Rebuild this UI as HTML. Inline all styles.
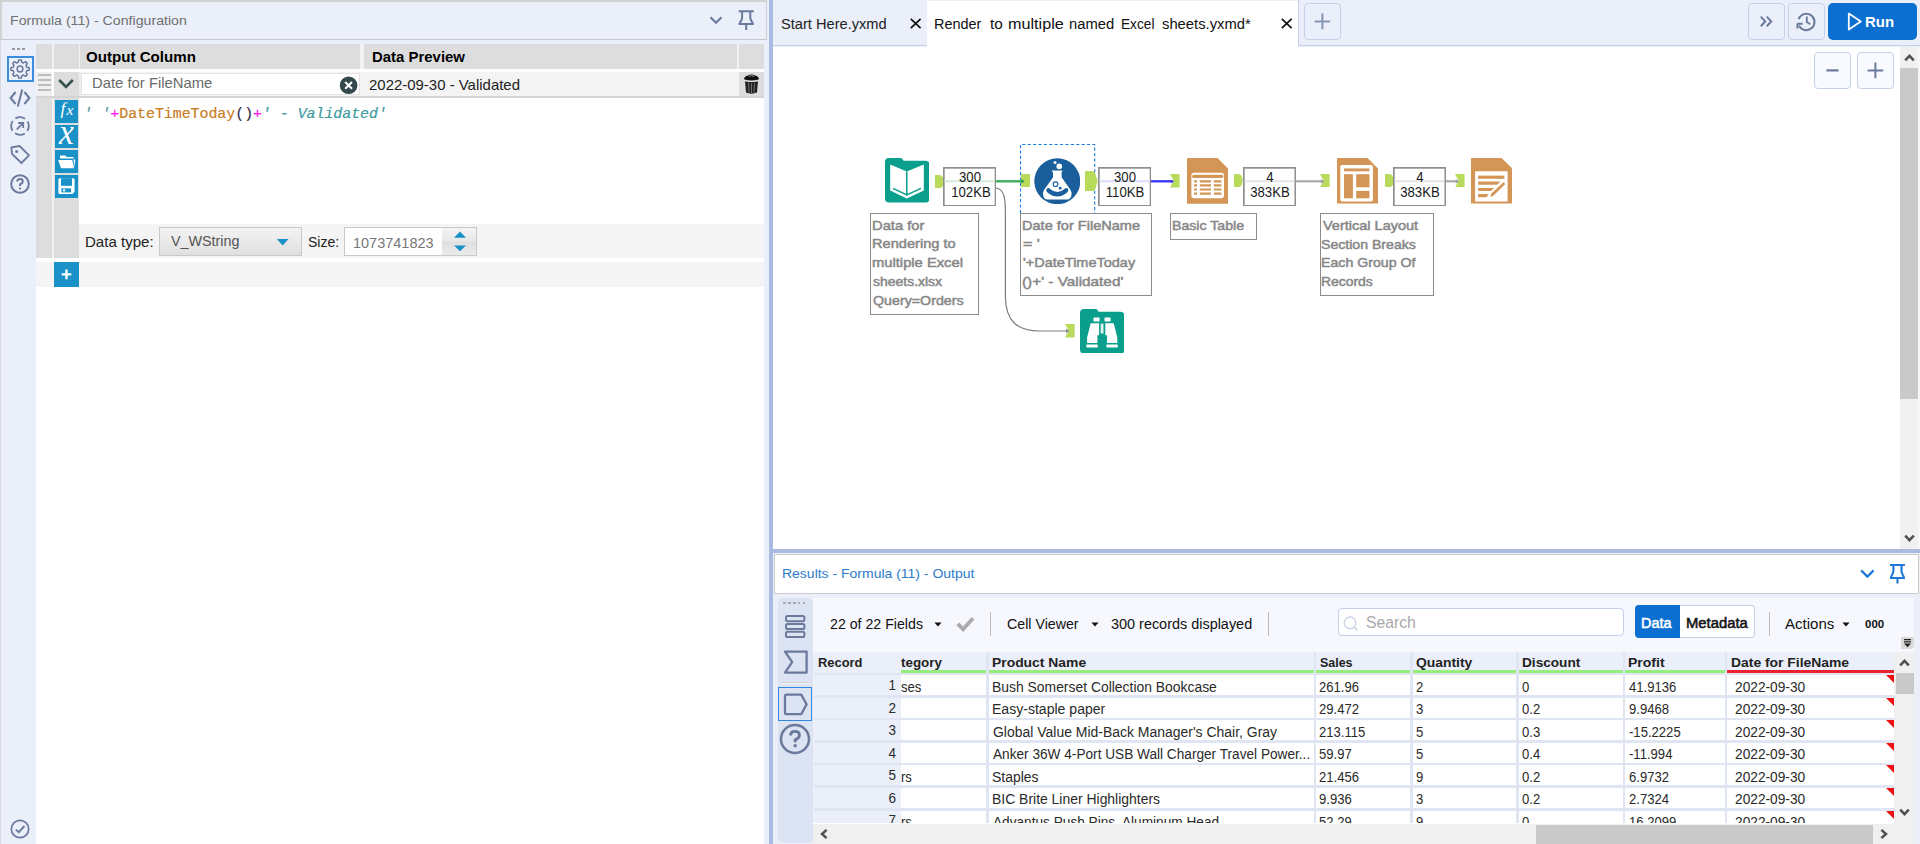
<!DOCTYPE html>
<html><head><meta charset="utf-8"><title>Alteryx Designer</title>
<style>
html,body{margin:0;padding:0;}
body{width:1920px;height:844px;overflow:hidden;background:#eaeff9;font-family:"Liberation Sans", sans-serif;}
#root{position:relative;width:1920px;height:844px;overflow:hidden;background:#eaeff9;}
.b{position:absolute;box-sizing:border-box;}
.t{position:absolute;white-space:pre;}
</style></head><body><div id="root">
<div class="b" style="left:0px;top:0px;width:767px;height:40px;background:#eaeff9;border:2px solid #d2d2d2;border-bottom:1px solid #c8c8c8;border-right:1px solid #cfcfcf;"></div>
<div class="b" style="left:0px;top:40px;width:1px;height:804px;background:#d8d8d8;"></div>
<svg class="b" style="left:706px;top:10px;" width="20" height="20" viewBox="0 0 20 20"><path d="M4.5 7.2 L10 12.8 L15.5 7.2" fill="none" stroke="#6b7a9c" stroke-width="2.1"/></svg>
<svg class="b" style="left:736px;top:8px;" width="20" height="24" viewBox="0 0 20 24"><path d="M2.7 3.2 H17.8 M6.1 3.2 V10.2 Q5.6 12.4 3.5 15.4 M14.3 3.2 V10.2 Q14.8 12.4 16.9 15.4 M2.6 16 H17.8 M10.2 16 V22" fill="none" stroke="#6b7a9c" stroke-width="2"/></svg>
<div class="b" style="left:36px;top:44px;width:728px;height:800px;background:#ffffff;"></div>
<div class="b" style="left:36px;top:44px;width:728px;height:25px;background:#f2f2f2;"></div>
<div class="b" style="left:52px;top:98px;width:2px;height:160px;background:#f2f2f2;"></div>
<div class="b" style="left:36px;top:44px;width:16px;height:25px;background:#dddddd;"></div>
<div class="b" style="left:54px;top:44px;width:25px;height:25px;background:#dddddd;"></div>
<div class="b" style="left:80px;top:44px;width:280px;height:25px;background:#dddddd;"></div>
<div class="b" style="left:364px;top:44px;width:373px;height:25px;background:#dddddd;"></div>
<div class="b" style="left:739px;top:44px;width:25px;height:25px;background:#dddddd;"></div>
<div class="b" style="left:36px;top:72px;width:728px;height:26px;background:#d4d4d4;"></div>
<div class="b" style="left:36px;top:72px;width:728px;height:24px;background:#f4f4f4;"></div>
<div class="b" style="left:36px;top:72px;width:16px;height:24px;background:#f0f0f0;"></div>
<div class="b" style="left:38px;top:74.2px;width:13px;height:2px;background:#bcbcbc;"></div>
<div class="b" style="left:38px;top:79.2px;width:13px;height:2px;background:#bcbcbc;"></div>
<div class="b" style="left:38px;top:84.1px;width:13px;height:2px;background:#bcbcbc;"></div>
<div class="b" style="left:38px;top:89.1px;width:13px;height:2px;background:#bcbcbc;"></div>
<div class="b" style="left:52px;top:72px;width:2px;height:24px;background:#ffffff;"></div>
<div class="b" style="left:54px;top:72px;width:25px;height:24px;background:#dddddd;"></div>
<svg class="b" style="left:56px;top:76px;" width="20" height="16" viewBox="0 0 20 16"><path d="M3.2 4 L10 11 L16.8 4" fill="none" stroke="#35504e" stroke-width="2.6"/></svg>
<div class="b" style="left:79px;top:72px;width:2px;height:24px;background:#eeeeee;"></div>
<div class="b" style="left:81px;top:73px;width:279px;height:22px;background:#ffffff;border:1px solid #e2e2e2;"></div>
<svg class="b" style="left:339px;top:76px;" width="19" height="19" viewBox="0 0 19 19"><circle cx="9.6" cy="9.3" r="8.8" fill="#33494b"/><path d="M6.2 5.9 L13 12.7 M13 5.9 L6.2 12.7" stroke="#fff" stroke-width="2.1"/></svg>
<div class="b" style="left:739px;top:72px;width:25px;height:24px;background:#dddddd;"></div>
<svg class="b" style="left:743px;top:73px;" width="17" height="22" viewBox="0 0 17 22"><path d="M1 6.2 Q1 3.6 5 2.6 Q8.5 0.2 12 2.6 Q16 3.6 16 6.2 Q8.5 8.6 1 6.2 Z" fill="#111"/><path d="M6 3.8 L8.5 2.2 L11 3.8" fill="none" stroke="#999" stroke-width="1"/><path d="M2 8.2 Q8.5 10 15 8.2 L14 19.5 Q8.5 21.8 3 19.5 Z" fill="#222"/><path d="M5.6 10 L6 19.6 M8.5 10.2 V20 M11.4 10 L11 19.6" stroke="#777" stroke-width="0.9"/></svg>
<div class="b" style="left:36px;top:98px;width:16px;height:160px;background:#dddddd;"></div>
<div class="b" style="left:54px;top:98px;width:25px;height:160px;background:#dddddd;"></div>
<div class="b" style="left:55px;top:100px;width:22.6px;height:22.6px;background:#1a91c7;"></div>
<div class="b" style="left:55px;top:125px;width:22.6px;height:22.6px;background:#1a91c7;"></div>
<div class="b" style="left:55px;top:150px;width:22.6px;height:22.6px;background:#1a91c7;"></div>
<div class="b" style="left:55px;top:175px;width:22.6px;height:22.6px;background:#1a91c7;"></div>
<svg class="b" style="left:55px;top:150px;" width="23" height="22" viewBox="0 0 23 22"><path d="M5 8.4 V5.6 H10.4 L11.6 7 H18.6 V8.6 H7.4 Z" fill="#fff"/><path d="M3.2 10 H17.2 L19.4 18.2 H6 Z" fill="#fff"/><path d="M18.3 9.6 H20.2 L19.9 16.5 Z" fill="#fff"/></svg>
<svg class="b" style="left:55px;top:175px;" width="23" height="22" viewBox="0 0 23 22"><path d="M3.4 4.8 Q3.4 3.2 5 3.2 H18 Q19.6 3.2 19.6 4.8 V16.8 L17.4 19 H5 Q3.4 19 3.4 17.4 Z" fill="#fff"/><rect x="6" y="3.2" width="11" height="7.6" fill="#1a91c7"/><rect x="6.4" y="13.4" width="9.6" height="4" fill="#1a91c7"/><rect x="8" y="14.4" width="2.2" height="2" fill="#fff"/></svg>
<div class="b" style="left:79px;top:224px;width:685px;height:34px;background:#f4f4f4;"></div>
<div class="b" style="left:159px;top:227px;width:143px;height:29px;border:1px solid #c9c9c9;background:linear-gradient(#f3f3f3,#e0e0e0);"></div>
<svg class="b" style="left:276px;top:238px;" width="14" height="9" viewBox="0 0 14 9"><path d="M0.8 1 H12.6 L6.7 7.6 Z" fill="#1a91c7"/></svg>
<div class="b" style="left:344px;top:227px;width:133px;height:29px;background:#ffffff;border:1px solid #c9c9c9;"></div>
<div class="b" style="left:442px;top:228px;width:34px;height:27px;background:linear-gradient(#f4f4f4 0%,#e8e8e8 48%,#dedede 52%,#ebebeb 100%);"></div>
<svg class="b" style="left:452px;top:230px;" width="16" height="24" viewBox="0 0 16 24"><path d="M2 7.7 L8 1.4 L14 7.7 Z M2 15.4 L8 21.3 L14 15.4 Z" fill="#1a91c7"/></svg>
<div class="b" style="left:36px;top:262px;width:728px;height:25px;background:#f4f4f4;"></div>
<div class="b" style="left:54px;top:262px;width:25px;height:25px;background:#1a91c7;"></div>
<svg class="b" style="left:54px;top:262px;" width="25" height="25" viewBox="0 0 25 25"><path d="M12.5 7.6 V17.2 M7.7 12.4 H17.3" stroke="#fff" stroke-width="2.4"/></svg>
<div class="b" style="left:12px;top:48px;width:3px;height:2px;background:#9a9a9a;"></div>
<div class="b" style="left:17px;top:48px;width:3px;height:2px;background:#9a9a9a;"></div>
<div class="b" style="left:22px;top:48px;width:3px;height:2px;background:#9a9a9a;"></div>
<div class="b" style="left:7px;top:56px;width:27px;height:26px;border:2px solid #3b8ede;"></div>
<svg class="b" style="left:0px;top:0px;" width="40" height="200" viewBox="0 0 40 200"><path d="M18.72 59.89 L21.28 59.89 L21.80 62.24 L23.51 62.94 L25.53 61.65 L27.35 63.47 L26.06 65.49 L26.76 67.20 L29.11 67.72 L29.11 70.28 L26.76 70.80 L26.06 72.51 L27.35 74.53 L25.53 76.35 L23.51 75.06 L21.80 75.76 L21.28 78.11 L18.72 78.11 L18.20 75.76 L16.49 75.06 L14.47 76.35 L12.65 74.53 L13.94 72.51 L13.24 70.80 L10.89 70.28 L10.89 67.72 L13.24 67.20 L13.94 65.49 L12.65 63.47 L14.47 61.65 L16.49 62.94 L18.20 62.24 Z" fill="none" stroke="#6b7a9c" stroke-width="1.5" stroke-linejoin="round"/><circle cx="20" cy="69" r="2.9" fill="none" stroke="#6b7a9c" stroke-width="1.5"/><path d="M15.6 92 L10.6 98 L15.6 104 M24.4 92 L29.4 98 L24.4 104 M22.2 89.4 L17.8 106.4" fill="none" stroke="#6b7a9c" stroke-width="2"/><circle cx="20" cy="126" r="8.8" fill="none" stroke="#6b7a9c" stroke-width="1.8" stroke-dasharray="10.2 3.62" stroke-dashoffset="5.1"/><path d="M16.8 129.4 L22.8 123.4 M18.2 123 H23.2 V128" fill="none" stroke="#6b7a9c" stroke-width="1.8"/><path d="M11.4 147.4 L19.6 146 L29 155.4 L21.4 163 L12 153.8 Z" fill="none" stroke="#6b7a9c" stroke-width="1.8" stroke-linejoin="round"/><circle cx="16.6" cy="151.4" r="1.5" fill="#6b7a9c"/><circle cx="20" cy="184" r="8.8" fill="none" stroke="#6b7a9c" stroke-width="2"/><path d="M17.2 181.6 Q17.2 179 20 179 Q22.8 179 22.8 181.4 Q22.8 183 20 184.4 V186" fill="none" stroke="#6b7a9c" stroke-width="2"/><circle cx="20" cy="188.6" r="1.1" fill="#6b7a9c"/></svg>
<svg class="b" style="left:8px;top:817px;" width="24" height="24" viewBox="0 0 24 24"><circle cx="12" cy="12" r="8.7" fill="none" stroke="#6b7a9c" stroke-width="1.7"/><path d="M7.8 12.6 L10.8 15.2 L16.4 9" fill="none" stroke="#6b7a9c" stroke-width="1.9"/></svg>
<div class="b" style="left:769px;top:0px;width:4px;height:844px;background:#a9bbe0;"></div>
<div class="b" style="left:773px;top:0px;width:1147px;height:46px;background:#eaeff9;border-bottom:1px solid #c6d0e8;"></div>
<div class="b" style="left:927px;top:0px;width:371px;height:47px;background:#ffffff;border-top:1px solid #efefef;"></div>
<div class="b" style="left:1298px;top:0px;width:1px;height:46px;background:#c6d0e8;"></div>
<svg class="b" style="left:910px;top:18px;" width="12" height="11" viewBox="0 0 12 11"><path d="M0.8 0.8 L10.6 10.2 M10.6 0.8 L0.8 10.2" stroke="#111" stroke-width="1.7" fill="none"/></svg>
<svg class="b" style="left:1281px;top:17.5px;" width="12" height="11" viewBox="0 0 12 11"><path d="M0.8 0.8 L10.6 10.2 M10.6 0.8 L0.8 10.2" stroke="#111" stroke-width="1.7" fill="none"/></svg>
<div class="b" style="left:1304px;top:3px;width:37px;height:37px;border:1px solid #c6d0e8;border-radius:4px;"></div>
<svg class="b" style="left:1304px;top:3px;" width="37" height="37" viewBox="0 0 37 37"><path d="M18.4 10.6 V26.2 M10.6 18.4 H26.2" stroke="#8595b8" stroke-width="2"/></svg>
<div class="b" style="left:1748px;top:3px;width:37px;height:37px;border:1px solid #c6d0e8;border-radius:4px;"></div>
<svg class="b" style="left:1748px;top:3px;" width="37" height="37" viewBox="0 0 37 37"><path d="M12.8 13.6 L17.2 18.4 L12.8 23.2 M18.8 13.6 L23.2 18.4 L18.8 23.2" fill="none" stroke="#6b7a9c" stroke-width="2"/></svg>
<div class="b" style="left:1788px;top:3px;width:37px;height:37px;border:1px solid #c6d0e8;border-radius:4px;"></div>
<svg class="b" style="left:1788px;top:3px;" width="37" height="37" viewBox="0 0 37 37"><path d="M11 22.6 A8.2 8.2 0 1 0 10.6 16.2" fill="none" stroke="#6b7a9c" stroke-width="2"/><path d="M9.4 20.6 V25.6 M9.4 20.8 H14.6" fill="none" stroke="#6b7a9c" stroke-width="1.9"/><path d="M18.8 13.6 V19 L22.4 21.2" fill="none" stroke="#6b7a9c" stroke-width="1.9"/></svg>
<div class="b" style="left:1828px;top:3px;width:89px;height:37px;background:#0b6fd1;border-radius:5px;"></div>
<svg class="b" style="left:1845px;top:10px;" width="20" height="24" viewBox="0 0 20 24"><path d="M3.8 3.6 L15.8 11.6 L3.8 19.6 Z" fill="none" stroke="#fff" stroke-width="1.8" stroke-linejoin="round"/></svg>
<div class="b" style="left:773px;top:47px;width:1127px;height:502px;background:#ffffff;"></div>
<div class="b" style="left:1900px;top:47px;width:18px;height:502px;background:#f0f0f0;"></div>
<div class="b" style="left:1918px;top:47px;width:2px;height:502px;background:#f7f7f7;"></div>
<div class="b" style="left:1900px;top:68px;width:18px;height:331px;background:#c9c9c9;"></div>
<svg class="b" style="left:1902.5px;top:53px;" width="13" height="10" viewBox="0 0 13 10"><path d="M2.2 7.4 L6.5 2.9 L10.8 7.4" fill="none" stroke="#505050" stroke-width="2.5"/></svg>
<svg class="b" style="left:1902.5px;top:533px;" width="13" height="10" viewBox="0 0 13 10"><path d="M2.2 2.6 L6.5 7.1 L10.8 2.6" fill="none" stroke="#505050" stroke-width="2.5"/></svg>
<div class="b" style="left:1814px;top:52px;width:37px;height:37px;background:#f8faff;border:1px solid #c6d0e8;border-radius:4px;"></div>
<div class="b" style="left:1857px;top:52px;width:37px;height:37px;background:#f8faff;border:1px solid #c6d0e8;border-radius:4px;"></div>
<svg class="b" style="left:1814px;top:52px;" width="37" height="37" viewBox="0 0 37 37"><path d="M12.4 18.4 H24.6" stroke="#6b7a9c" stroke-width="2.2"/></svg>
<svg class="b" style="left:1857px;top:52px;" width="37" height="37" viewBox="0 0 37 37"><path d="M18.4 10.6 V26.2 M10.6 18.4 H26.2" stroke="#6b7a9c" stroke-width="2"/></svg>
<div class="b" style="left:773px;top:549px;width:1147px;height:4px;background:#a9bbe0;"></div>
<svg class="b" style="left:884.7px;top:158.4px;" width="44.6" height="44.4" viewBox="0 0 44.6 44.4"><path d="M4 0 H15.4 Q16.8 0 17.6 1.2 L18.6 2.8 H40.6 Q44.6 2.8 44.6 6.8 V40.4 Q44.6 44.4 40.6 44.4 H4 Q0 44.4 0 40.4 V4 Q0 0 4 0 Z" fill="#0a9e8c"/><path d="M5.2 6.6 L21.8 13.6 L38.8 6.6 V32.6 L21.8 40.6 L5.2 32.6 Z" fill="#fff"/><path d="M21.8 13.6 V36.4 M8 30.4 L21.8 37 L36 30.4" fill="none" stroke="#0a9e8c" stroke-width="1.5"/></svg>
<svg class="b" style="left:934.6px;top:174.6px;" width="8.6" height="13.2" viewBox="0 0 8.6 13.2"><path d="M0 0 H4.3999999999999995 Q8.6 0.4 8.6 6.6 Q8.6 12.799999999999999 4.3999999999999995 13.2 H0 Z" fill="#b8db5c"/></svg>
<svg class="b" style="left:942.6px;top:166.5px;" width="53.4" height="39.7" viewBox="0 0 53.4 39.7"><rect x="0.85" y="0.85" width="51.70" height="38.00" fill="#fff" stroke="#8f8f8f" stroke-width="1.7"/></svg>
<svg class="b" style="left:1018px;top:142px;" width="80" height="74" viewBox="0 0 80 74"><path d="M2.5 71 V2.5 H76.7 V71" fill="none" stroke="#1e7fe0" stroke-width="1.1" stroke-dasharray="3.2 2.2"/></svg>
<svg class="b" style="left:1021px;top:174.3px;" width="9" height="13.2" viewBox="0 0 9 13.2"><path d="M0 0 H9 V13.2 H0 L0 6.6 Z" fill="#b8db5c"/></svg>
<svg class="b" style="left:1033.6px;top:157.8px;" width="46.6" height="46.6" viewBox="0 0 46.6 46.6"><circle cx="23.3" cy="23.2" r="23" fill="#1a5f9c"/><path d="M18 12.4 H28.3 V13.6 L27.6 14.2 V19.2 L36.6 32 Q38.6 35.4 37.2 38.4 Q35.8 41.6 32 41.6 H14.6 Q10.8 41.6 9.4 38.4 Q8 35.4 10 32 L19.05 19.2 V14.2 L18 13.6 Z" fill="#fff"/><path d="M14.4 32.3 Q23.3 40.3 32.2 32.3" fill="none" stroke="#1a5f9c" stroke-width="4.3" stroke-linecap="round"/><circle cx="21.55" cy="26.2" r="2.3" fill="none" stroke="#1a5f9c" stroke-width="1.15"/><circle cx="26.2" cy="30.2" r="1.4" fill="#1a5f9c"/><circle cx="21.05" cy="4.4" r="1.5" fill="#fff"/><circle cx="25.25" cy="8.4" r="2.8" fill="#fff"/></svg>
<svg class="b" style="left:1085.2px;top:170.5px;" width="12.6" height="20.4" viewBox="0 0 12.6 20.4"><path d="M0 0 H7.4 Q9 0 9.8 1.6 L12.4 9 Q12.8 10.2 12.4 11.4 L9.8 18.8 Q9 20.4 7.4 20.4 H0 Z" fill="#b8db5c"/></svg>
<svg class="b" style="left:1097.6px;top:166.5px;" width="53.4" height="39.7" viewBox="0 0 53.4 39.7"><rect x="0.85" y="0.85" width="51.70" height="38.00" fill="#fff" stroke="#8f8f8f" stroke-width="1.7"/></svg>
<svg class="b" style="left:1170.2px;top:174.2px;" width="9.6" height="13.4" viewBox="0 0 9.6 13.4"><path d="M0 0 H9.6 V13.4 H0 L3.6 6.7 Z" fill="#b8db5c"/></svg>
<svg class="b" style="left:1186.8px;top:157.9px;" width="41" height="45.8" viewBox="0 0 41 45.8"><path d="M0.8 0 H30.5 L41 10.5 V45.8 H0 V0.8 Q0 0 0.8 0 Z" fill="#d49657"/><rect x="4.4" y="14.8" width="32.6" height="25.4" rx="2.6" fill="#fff"/><path d="M6.6 18.4 H34.8" stroke="#d49657" stroke-width="3.1" stroke-linecap="round"/><path d="M7 23.4 H10 M12.8 23.4 H24 M26.8 23.4 H34.4" stroke="#d49657" stroke-width="2.1"/><path d="M7 27.4 H10 M12.8 27.4 H24 M26.8 27.4 H34.4" stroke="#d49657" stroke-width="2.1"/><path d="M7 31.5 H10 M12.8 31.5 H24 M26.8 31.5 H34.4" stroke="#d49657" stroke-width="2.1"/><path d="M7 35.6 H10 M12.8 35.6 H24 M26.8 35.6 H34.4" stroke="#d49657" stroke-width="2.1"/></svg>
<svg class="b" style="left:1234.4px;top:174.3px;" width="8.6" height="13.2" viewBox="0 0 8.6 13.2"><path d="M0 0 H4.3999999999999995 Q8.6 0.4 8.6 6.6 Q8.6 12.799999999999999 4.3999999999999995 13.2 H0 Z" fill="#b8db5c"/></svg>
<svg class="b" style="left:1242.8px;top:166.5px;" width="53.2" height="39.7" viewBox="0 0 53.2 39.7"><rect x="0.85" y="0.85" width="51.50" height="38.00" fill="#fff" stroke="#8f8f8f" stroke-width="1.7"/></svg>
<svg class="b" style="left:1320.2px;top:174.1px;" width="9.6" height="13.4" viewBox="0 0 9.6 13.4"><path d="M0 0 H9.6 V13.4 H0 L3.6 6.7 Z" fill="#b8db5c"/></svg>
<svg class="b" style="left:1336.6px;top:158px;" width="41" height="45.6" viewBox="0 0 41 45.6"><path d="M0.8 0 H30.6 L41 10.4 V45.6 H0 V0.8 Q0 0 0.8 0 Z" fill="#d49657"/><rect x="3.3" y="6.9" width="32.6" height="36.6" rx="1.8" fill="#fff"/><path d="M7 11.9 H32.5" stroke="#d49657" stroke-width="2.9"/><rect x="7" y="16.2" width="8.9" height="24.1" fill="#d49657"/><rect x="19.2" y="16.2" width="13.3" height="13.1" fill="#d49657"/><rect x="19.2" y="32.9" width="13.3" height="7.4" fill="#d49657"/></svg>
<svg class="b" style="left:1384.6px;top:174.2px;" width="8.6" height="13.2" viewBox="0 0 8.6 13.2"><path d="M0 0 H4.3999999999999995 Q8.6 0.4 8.6 6.6 Q8.6 12.799999999999999 4.3999999999999995 13.2 H0 Z" fill="#b8db5c"/></svg>
<svg class="b" style="left:1392.6px;top:166.5px;" width="53.2" height="39.7" viewBox="0 0 53.2 39.7"><rect x="0.85" y="0.85" width="51.50" height="38.00" fill="#fff" stroke="#8f8f8f" stroke-width="1.7"/></svg>
<svg class="b" style="left:1455px;top:174.1px;" width="9.6" height="13.4" viewBox="0 0 9.6 13.4"><path d="M0 0 H9.6 V13.4 H0 L3.6 6.7 Z" fill="#b8db5c"/></svg>
<svg class="b" style="left:1471.2px;top:158px;" width="41.1" height="45.6" viewBox="0 0 41.1 45.6"><path d="M0.8 0 H30.700000000000003 L41.1 10.4 V45.6 H0 V0.8 Q0 0 0.8 0 Z" fill="#d49657"/><path d="M4.1 13.3 H36.6 V43.5 H4.1 Z" fill="#fff"/><path d="M7.1 17.60 H33.4 L33.4 20.80 H7.1 Z" fill="#d49657"/><path d="M7.1 23.60 H29.4 L26.4 26.80 H7.1 Z" fill="#d49657"/><path d="M7.1 29.90 H23.0 L20.0 33.10 H7.1 Z" fill="#d49657"/><path d="M7.1 36.00 H17.6 L15.6 39.20 H7.1 Z" fill="#d49657"/><path d="M32.5 23.3 L35.2 26 L22.8 38.2 L18.4 39.8 L19.8 35.4 Z" fill="#d49657" stroke="#fff" stroke-width="1.1"/></svg>
<svg class="b" style="left:1065.3px;top:324.2px;" width="9.6" height="13.5" viewBox="0 0 9.6 13.5"><path d="M0 0 H9.6 V13.5 H0 L3.6 6.75 Z" fill="#b8db5c"/></svg>
<svg class="b" style="left:1079.9px;top:308.5px;" width="44.5" height="44.5" viewBox="0 0 44.5 44.5"><path d="M4 0 H15.4 Q16.8 0 17.6 1.2 L18.6 2.8 H40.5 Q44.5 2.8 44.5 6.8 V40.5 Q44.5 44.5 40.5 44.5 H4 Q0 44.5 0 40.5 V4 Q0 0 4 0 Z" fill="#0a9e8c"/><rect x="13.5" y="8.5" width="6.1" height="3.9" rx="0.6" fill="#fff"/><rect x="24.5" y="8.5" width="6.1" height="3.9" rx="0.6" fill="#fff"/><path d="M10.7 14.2 H19.1 V26.3 H17.4 V34.1 H7.1 V28.4 Z" fill="#fff"/><path d="M33.7 14.2 H25.3 V26.3 H27 V34.1 H37.3 V28.4 Z" fill="#fff"/><rect x="20.7" y="14.6" width="2.8" height="9.9" fill="#e4f4f1"/><rect x="6.4" y="35.6" width="11.4" height="2.9" rx="0.5" fill="#fff"/><rect x="26.4" y="35.6" width="11.4" height="2.9" rx="0.5" fill="#fff"/></svg>
<svg class="b" style="left:773px;top:47px;pointer-events:none;" width="1127" height="502" viewBox="773 47 1127 502"><path d="M944.4 181.3 H994.2" stroke="#d3ead6" stroke-width="2"/><path d="M996 181.3 H1022" stroke="#3fae60" stroke-width="2.4"/><path d="M1021.4 179.2 L1024.8 181.3 L1021.4 183.4 Z" fill="#2f9a50"/><path d="M1099.4 181.3 H1149.2" stroke="#dcdcf8" stroke-width="2"/><path d="M1151 181.3 H1172" stroke="#3c3cf0" stroke-width="2.4"/><path d="M1171 179.4 L1174.4 181.3 L1171 183.2 Z" fill="#3c3cf0"/><path d="M1244.6 181.3 H1294.2" stroke="#e4e4e4" stroke-width="2"/><path d="M1296 181.3 H1322" stroke="#aaaaaa" stroke-width="2.2"/><path d="M1321 179.2 L1324.6 181.3 L1321 183.4 Z" fill="#9a9a9a"/><path d="M1394.4 181.3 H1444" stroke="#e4e4e4" stroke-width="2"/><path d="M1446 181.3 H1457" stroke="#aaaaaa" stroke-width="2.2"/><path d="M1455.8 179.2 L1459.4 181.3 L1455.8 183.4 Z" fill="#9a9a9a"/><path d="M996 188 C1004 189 1005.4 198 1005.4 212 V296 C1005.4 322 1018 331 1040 331 H1067" fill="none" stroke="#7c7c7c" stroke-width="1.2"/><path d="M1066 328.8 L1069.6 331 L1066 333.2 Z" fill="#888"/></svg>
<div class="b" style="left:870.4px;top:213px;width:108.6px;height:101.6px;background:#ffffff;border:1px solid #8c8c8c;"></div>
<div class="b" style="left:1020.2px;top:213px;width:132px;height:82.8px;background:#ffffff;border:1px solid #8c8c8c;"></div>
<div class="b" style="left:1170px;top:213px;width:87.2px;height:26.6px;background:#ffffff;border:1px solid #8c8c8c;"></div>
<div class="b" style="left:1320.2px;top:213px;width:113.4px;height:83.2px;background:#ffffff;border:1px solid #8c8c8c;"></div>
<div class="b" style="left:774px;top:553.6px;width:1145px;height:40.2px;background:#ffffff;border:1.4px solid #cbcbcb;"></div>
<svg class="b" style="left:1858px;top:566px;" width="18" height="14" viewBox="0 0 18 14"><path d="M3.2 4.4 L9.4 10.6 L15.6 4.4" fill="none" stroke="#1f78d6" stroke-width="2.2"/></svg>
<svg class="b" style="left:1886px;top:561px;" width="22" height="26" viewBox="0 0 22 26"><path d="M4 4 H18.9 M7.4 4 V10.5 Q6.9 12.8 4.9 16.2 M15.5 4 V10.5 Q16 12.8 18 16.2 M4 17 H18.9 M11.5 17 V22.6" fill="none" stroke="#1f78d6" stroke-width="2.1"/></svg>
<div class="b" style="left:777.6px;top:598px;width:35px;height:244.6px;background:#dce3f2;border-radius:5px;"></div>
<div class="b" style="left:783.4px;top:602.4px;width:2.6px;height:1.8px;background:#a8a8a8;"></div>
<div class="b" style="left:788.2px;top:602.4px;width:2.6px;height:1.8px;background:#a8a8a8;"></div>
<div class="b" style="left:793px;top:602.4px;width:2.6px;height:1.8px;background:#a8a8a8;"></div>
<div class="b" style="left:797.8px;top:602.4px;width:2.6px;height:1.8px;background:#a8a8a8;"></div>
<div class="b" style="left:802.6px;top:602.4px;width:2.6px;height:1.8px;background:#a8a8a8;"></div>
<svg class="b" style="left:785px;top:615.1px;" width="21" height="24" viewBox="0 0 21 24"><rect x="1" y="1" width="18.4" height="5.2" rx="1.6" fill="none" stroke="#6b7a9c" stroke-width="2"/><rect x="1" y="8.9" width="18.4" height="5.2" rx="1.6" fill="none" stroke="#6b7a9c" stroke-width="2"/><rect x="1" y="16.8" width="18.4" height="5.2" rx="1.6" fill="none" stroke="#6b7a9c" stroke-width="2"/></svg>
<svg class="b" style="left:783px;top:650px;" width="26" height="25" viewBox="0 0 26 25"><path d="M2 1.7 H23.6 V22.6 H2 L9.2 12.1 Z" fill="none" stroke="#6b7a9c" stroke-width="2.3" stroke-linejoin="round"/></svg>
<div class="b" style="left:780px;top:682.2px;width:30px;height:1px;background:#cfcfd0;"></div>
<div class="b" style="left:780px;top:683.2px;width:30px;height:1.2px;background:#f7f8fb;"></div>
<div class="b" style="left:777.7px;top:686.6px;width:34.6px;height:34.7px;background:#dce3f2;border:1.7px solid #3088e0;"></div>
<svg class="b" style="left:782px;top:692px;" width="27" height="25" viewBox="0 0 27 25"><path d="M4.4 2.6 H19.2 L24.6 12.4 L19.2 22.2 H4.4 Q3 22.2 3 20.8 V4 Q3 2.6 4.4 2.6 Z" fill="none" stroke="#6b7a9c" stroke-width="2.3" stroke-linejoin="round"/></svg>
<svg class="b" style="left:779px;top:722.7px;" width="32" height="32" viewBox="0 0 32 32"><circle cx="16" cy="16" r="14" fill="none" stroke="#6b7a9c" stroke-width="2.5"/><path d="M11.6 12.4 Q11.6 8.4 16 8.4 Q20.4 8.4 20.4 12.2 Q20.4 14.8 16.2 16.8 V19.2" fill="none" stroke="#6b7a9c" stroke-width="2.9"/><circle cx="16.2" cy="22.8" r="1.7" fill="#6b7a9c"/></svg>
<div class="b" style="left:813.4px;top:598.4px;width:1101px;height:53.2px;background:#f6f8fe;"></div>
<div class="b" style="left:990.2px;top:612px;width:1.2px;height:24.4px;background:#bdbdbd;"></div>
<div class="b" style="left:1267.6px;top:612px;width:1.2px;height:24.4px;background:#bdbdbd;"></div>
<div class="b" style="left:1769px;top:612px;width:1.2px;height:24.4px;background:#bdbdbd;"></div>
<svg class="b" style="left:934.2px;top:622.4px;" width="8" height="5" viewBox="0 0 8 5"><path d="M0.4 0.6 H7.6 L4 4.4 Z" fill="#111"/></svg>
<svg class="b" style="left:1090.6px;top:622.4px;" width="8" height="5" viewBox="0 0 8 5"><path d="M0.4 0.6 H7.6 L4 4.4 Z" fill="#111"/></svg>
<svg class="b" style="left:1842px;top:622.4px;" width="8" height="5" viewBox="0 0 8 5"><path d="M0.4 0.6 H7.6 L4 4.4 Z" fill="#111"/></svg>
<svg class="b" style="left:954px;top:614px;" width="22" height="20" viewBox="0 0 22 20"><path d="M2.4 11.2 L5.2 8.4 L9 12.4 L17.6 3 L20.4 5.6 L9.2 18 Z" fill="#ababab"/></svg>
<div class="b" style="left:1338px;top:608px;width:285.6px;height:28px;background:#ffffff;border:1px solid #c6d0e8;border-radius:4px;"></div>
<svg class="b" style="left:1341px;top:614px;" width="20" height="20" viewBox="0 0 20 20"><circle cx="9" cy="8.8" r="5.8" fill="none" stroke="#ccd3e6" stroke-width="1.4"/><path d="M13.2 13 L16.4 16.4" stroke="#ccd3e6" stroke-width="1.6"/></svg>
<div class="b" style="left:1680px;top:605.2px;width:74.6px;height:33px;background:#ffffff;border:1px solid #c6d0e8;border-left:none;border-radius:0 4px 4px 0;"></div>
<div class="b" style="left:1635.2px;top:605.2px;width:44.8px;height:33px;background:#0b6fd1;border-radius:4px 0 0 4px;"></div>
<div class="b" style="left:1901px;top:636.6px;width:13px;height:12.6px;background:#d9d9d9;border-radius:0 0 4px 0;"></div>
<svg class="b" style="left:1901px;top:636.6px;" width="13" height="12.6" viewBox="0 0 13 12.6"><path d="M3 2.6 H10 M3 4.8 H10" stroke="#222" stroke-width="1.2"/><path d="M3 6.6 H10 L6.5 10.2 Z" fill="#222"/></svg>
<div class="b" style="left:814.4px;top:651.6px;width:1079.8000000000002px;height:171.2px;background:#dfe5f3;"></div>
<div class="b" style="left:813.4px;top:822.8px;width:1081px;height:1px;background:#ffffff;"></div>
<div class="b" style="left:814.4px;top:651.6px;width:86.20000000000005px;height:21.4px;background:#eaeff9;"></div>
<div class="b" style="left:900.6px;top:651.6px;width:85.69999999999993px;height:21.4px;background:#eaeff9;"></div>
<div class="b" style="left:900.6px;top:670.4px;width:85.69999999999993px;height:2.4px;background:#96ee7a;"></div>
<div class="b" style="left:988.8px;top:651.6px;width:324.9000000000001px;height:21.4px;background:#eaeff9;"></div>
<div class="b" style="left:988.8px;top:670.4px;width:324.9000000000001px;height:2.4px;background:#96ee7a;"></div>
<div class="b" style="left:1316.2px;top:651.6px;width:93.79999999999995px;height:21.4px;background:#eaeff9;"></div>
<div class="b" style="left:1316.2px;top:670.4px;width:93.79999999999995px;height:2.4px;background:#96ee7a;"></div>
<div class="b" style="left:1412.5px;top:651.6px;width:103.70000000000005px;height:21.4px;background:#eaeff9;"></div>
<div class="b" style="left:1412.5px;top:670.4px;width:103.70000000000005px;height:2.4px;background:#96ee7a;"></div>
<div class="b" style="left:1518.7px;top:651.6px;width:104.29999999999995px;height:21.4px;background:#eaeff9;"></div>
<div class="b" style="left:1518.7px;top:670.4px;width:104.29999999999995px;height:2.4px;background:#96ee7a;"></div>
<div class="b" style="left:1625.2px;top:651.6px;width:99.79999999999995px;height:21.4px;background:#eaeff9;"></div>
<div class="b" style="left:1625.2px;top:670.4px;width:99.79999999999995px;height:2.4px;background:#96ee7a;"></div>
<div class="b" style="left:1727.4px;top:651.6px;width:166.79999999999995px;height:21.4px;background:#eaeff9;"></div>
<div class="b" style="left:1727.4px;top:670.4px;width:166.79999999999995px;height:2.4px;background:#e8222e;"></div>
<div class="b" style="left:814.4px;top:675.2px;width:86.20000000000005px;height:19.8px;background:#eaeff9;"></div>
<div class="b" style="left:900.6px;top:675.2px;width:85.69999999999993px;height:19.8px;background:#ffffff;"></div>
<div class="b" style="left:988.8px;top:675.2px;width:324.9000000000001px;height:19.8px;background:#ffffff;"></div>
<div class="b" style="left:1316.2px;top:675.2px;width:93.79999999999995px;height:19.8px;background:#ffffff;"></div>
<div class="b" style="left:1412.5px;top:675.2px;width:103.70000000000005px;height:19.8px;background:#ffffff;"></div>
<div class="b" style="left:1518.7px;top:675.2px;width:104.29999999999995px;height:19.8px;background:#ffffff;"></div>
<div class="b" style="left:1625.2px;top:675.2px;width:99.79999999999995px;height:19.8px;background:#ffffff;"></div>
<div class="b" style="left:1727.4px;top:675.2px;width:166.79999999999995px;height:19.8px;background:#ffffff;"></div>
<svg class="b" style="left:1885.6px;top:675.2px;" width="8.6" height="8.6" viewBox="0 0 8.6 8.6"><path d="M0 0 H8.6 V8.6 Z" fill="#ee1111"/></svg>
<div class="b" style="left:814.4px;top:697.75px;width:86.20000000000005px;height:19.8px;background:#eaeff9;"></div>
<div class="b" style="left:900.6px;top:697.75px;width:85.69999999999993px;height:19.8px;background:#ffffff;"></div>
<div class="b" style="left:988.8px;top:697.75px;width:324.9000000000001px;height:19.8px;background:#ffffff;"></div>
<div class="b" style="left:1316.2px;top:697.75px;width:93.79999999999995px;height:19.8px;background:#ffffff;"></div>
<div class="b" style="left:1412.5px;top:697.75px;width:103.70000000000005px;height:19.8px;background:#ffffff;"></div>
<div class="b" style="left:1518.7px;top:697.75px;width:104.29999999999995px;height:19.8px;background:#ffffff;"></div>
<div class="b" style="left:1625.2px;top:697.75px;width:99.79999999999995px;height:19.8px;background:#ffffff;"></div>
<div class="b" style="left:1727.4px;top:697.75px;width:166.79999999999995px;height:19.8px;background:#ffffff;"></div>
<svg class="b" style="left:1885.6px;top:697.75px;" width="8.6" height="8.6" viewBox="0 0 8.6 8.6"><path d="M0 0 H8.6 V8.6 Z" fill="#ee1111"/></svg>
<div class="b" style="left:814.4px;top:720.3000000000001px;width:86.20000000000005px;height:19.8px;background:#eaeff9;"></div>
<div class="b" style="left:900.6px;top:720.3000000000001px;width:85.69999999999993px;height:19.8px;background:#ffffff;"></div>
<div class="b" style="left:988.8px;top:720.3000000000001px;width:324.9000000000001px;height:19.8px;background:#ffffff;"></div>
<div class="b" style="left:1316.2px;top:720.3000000000001px;width:93.79999999999995px;height:19.8px;background:#ffffff;"></div>
<div class="b" style="left:1412.5px;top:720.3000000000001px;width:103.70000000000005px;height:19.8px;background:#ffffff;"></div>
<div class="b" style="left:1518.7px;top:720.3000000000001px;width:104.29999999999995px;height:19.8px;background:#ffffff;"></div>
<div class="b" style="left:1625.2px;top:720.3000000000001px;width:99.79999999999995px;height:19.8px;background:#ffffff;"></div>
<div class="b" style="left:1727.4px;top:720.3000000000001px;width:166.79999999999995px;height:19.8px;background:#ffffff;"></div>
<svg class="b" style="left:1885.6px;top:720.3000000000001px;" width="8.6" height="8.6" viewBox="0 0 8.6 8.6"><path d="M0 0 H8.6 V8.6 Z" fill="#ee1111"/></svg>
<div class="b" style="left:814.4px;top:742.85px;width:86.20000000000005px;height:19.8px;background:#eaeff9;"></div>
<div class="b" style="left:900.6px;top:742.85px;width:85.69999999999993px;height:19.8px;background:#ffffff;"></div>
<div class="b" style="left:988.8px;top:742.85px;width:324.9000000000001px;height:19.8px;background:#ffffff;"></div>
<div class="b" style="left:1316.2px;top:742.85px;width:93.79999999999995px;height:19.8px;background:#ffffff;"></div>
<div class="b" style="left:1412.5px;top:742.85px;width:103.70000000000005px;height:19.8px;background:#ffffff;"></div>
<div class="b" style="left:1518.7px;top:742.85px;width:104.29999999999995px;height:19.8px;background:#ffffff;"></div>
<div class="b" style="left:1625.2px;top:742.85px;width:99.79999999999995px;height:19.8px;background:#ffffff;"></div>
<div class="b" style="left:1727.4px;top:742.85px;width:166.79999999999995px;height:19.8px;background:#ffffff;"></div>
<svg class="b" style="left:1885.6px;top:742.85px;" width="8.6" height="8.6" viewBox="0 0 8.6 8.6"><path d="M0 0 H8.6 V8.6 Z" fill="#ee1111"/></svg>
<div class="b" style="left:814.4px;top:765.4000000000001px;width:86.20000000000005px;height:19.8px;background:#eaeff9;"></div>
<div class="b" style="left:900.6px;top:765.4000000000001px;width:85.69999999999993px;height:19.8px;background:#ffffff;"></div>
<div class="b" style="left:988.8px;top:765.4000000000001px;width:324.9000000000001px;height:19.8px;background:#ffffff;"></div>
<div class="b" style="left:1316.2px;top:765.4000000000001px;width:93.79999999999995px;height:19.8px;background:#ffffff;"></div>
<div class="b" style="left:1412.5px;top:765.4000000000001px;width:103.70000000000005px;height:19.8px;background:#ffffff;"></div>
<div class="b" style="left:1518.7px;top:765.4000000000001px;width:104.29999999999995px;height:19.8px;background:#ffffff;"></div>
<div class="b" style="left:1625.2px;top:765.4000000000001px;width:99.79999999999995px;height:19.8px;background:#ffffff;"></div>
<div class="b" style="left:1727.4px;top:765.4000000000001px;width:166.79999999999995px;height:19.8px;background:#ffffff;"></div>
<svg class="b" style="left:1885.6px;top:765.4000000000001px;" width="8.6" height="8.6" viewBox="0 0 8.6 8.6"><path d="M0 0 H8.6 V8.6 Z" fill="#ee1111"/></svg>
<div class="b" style="left:814.4px;top:787.95px;width:86.20000000000005px;height:19.8px;background:#eaeff9;"></div>
<div class="b" style="left:900.6px;top:787.95px;width:85.69999999999993px;height:19.8px;background:#ffffff;"></div>
<div class="b" style="left:988.8px;top:787.95px;width:324.9000000000001px;height:19.8px;background:#ffffff;"></div>
<div class="b" style="left:1316.2px;top:787.95px;width:93.79999999999995px;height:19.8px;background:#ffffff;"></div>
<div class="b" style="left:1412.5px;top:787.95px;width:103.70000000000005px;height:19.8px;background:#ffffff;"></div>
<div class="b" style="left:1518.7px;top:787.95px;width:104.29999999999995px;height:19.8px;background:#ffffff;"></div>
<div class="b" style="left:1625.2px;top:787.95px;width:99.79999999999995px;height:19.8px;background:#ffffff;"></div>
<div class="b" style="left:1727.4px;top:787.95px;width:166.79999999999995px;height:19.8px;background:#ffffff;"></div>
<svg class="b" style="left:1885.6px;top:787.95px;" width="8.6" height="8.6" viewBox="0 0 8.6 8.6"><path d="M0 0 H8.6 V8.6 Z" fill="#ee1111"/></svg>
<div class="b" style="left:814.4px;top:810.5px;width:86.20000000000005px;height:12.8px;background:#eaeff9;"></div>
<div class="b" style="left:900.6px;top:810.5px;width:85.69999999999993px;height:12.8px;background:#ffffff;"></div>
<div class="b" style="left:988.8px;top:810.5px;width:324.9000000000001px;height:12.8px;background:#ffffff;"></div>
<div class="b" style="left:1316.2px;top:810.5px;width:93.79999999999995px;height:12.8px;background:#ffffff;"></div>
<div class="b" style="left:1412.5px;top:810.5px;width:103.70000000000005px;height:12.8px;background:#ffffff;"></div>
<div class="b" style="left:1518.7px;top:810.5px;width:104.29999999999995px;height:12.8px;background:#ffffff;"></div>
<div class="b" style="left:1625.2px;top:810.5px;width:99.79999999999995px;height:12.8px;background:#ffffff;"></div>
<div class="b" style="left:1727.4px;top:810.5px;width:166.79999999999995px;height:12.8px;background:#ffffff;"></div>
<svg class="b" style="left:1885.6px;top:810.5px;" width="8.6" height="8.6" viewBox="0 0 8.6 8.6"><path d="M0 0 H8.6 V8.6 Z" fill="#ee1111"/></svg>
<div class="b" style="left:1894.4px;top:651.6px;width:19.8px;height:172px;background:#f0f0f0;"></div>
<div class="b" style="left:1895.6px;top:673.2px;width:18px;height:20.6px;background:#c9c9c9;"></div>
<svg class="b" style="left:1898px;top:657.6px;" width="13" height="10" viewBox="0 0 13 10"><path d="M2.2 7.4 L6.5 2.9 L10.8 7.4" fill="none" stroke="#505050" stroke-width="2.5"/></svg>
<svg class="b" style="left:1898px;top:807px;" width="13" height="10" viewBox="0 0 13 10"><path d="M2.2 2.6 L6.5 7.1 L10.8 2.6" fill="none" stroke="#505050" stroke-width="2.5"/></svg>
<div class="b" style="left:813.6px;top:823.7px;width:1100.6px;height:20.3px;background:#f0f0f0;"></div>
<div class="b" style="left:1536px;top:825px;width:336.6px;height:19px;background:#c9c9c9;"></div>
<svg class="b" style="left:819px;top:828px;" width="10" height="12" viewBox="0 0 10 12"><path d="M7.6 1.8 L3 6 L7.6 10.2" fill="none" stroke="#505050" stroke-width="2.5"/></svg>
<svg class="b" style="left:1879px;top:828px;" width="10" height="12" viewBox="0 0 10 12"><path d="M2.4 1.8 L7 6 L2.4 10.2" fill="none" stroke="#505050" stroke-width="2.5"/></svg>
<div class="t" style="font-size:13.4px;line-height:13.4px;top:13.56px;color:#707070;left:9.64px;transform:scaleX(1.0578);transform-origin:0 0;">Formula (11) - Configuration</div>
<div class="t" style="font-size:14px;line-height:14px;top:50.45px;color:#000;left:86.30px;transform:scaleX(1.0792);transform-origin:0 0;font-weight:700;">Output Column</div>
<div class="t" style="font-size:14px;line-height:14px;top:50.45px;color:#000;left:372.23px;transform:scaleX(1.0663);transform-origin:0 0;font-weight:700;">Data Preview</div>
<div class="t" style="font-size:14.8px;line-height:14.8px;top:76.27px;color:#6a6a6a;left:92.00px;transform:scaleX(1.0025);transform-origin:0 0;">Date for FileName</div>
<div class="t" style="font-size:15px;line-height:15px;top:77.30px;color:#222;left:368.50px;transform:scaleX(0.9967);transform-origin:0 0;">2022-09-30 - Validated</div>
<div class="t" style="font-size:14.95px;line-height:14.95px;top:107.43px;color:#5e97a6;left:83.60px;font-family:'Liberation Mono', monospace;font-style:italic;letter-spacing:-0.050px;-webkit-text-stroke:0.18px #5e97a6;">&#x27; &#x27;</div>
<div class="t" style="font-size:14.95px;line-height:14.95px;top:107.43px;color:#ff1cf0;left:110.36px;font-family:'Liberation Mono', monospace;letter-spacing:-0.050px;-webkit-text-stroke:0.18px #ff1cf0;">+</div>
<div class="t" style="font-size:14.95px;line-height:14.95px;top:107.43px;color:#c87c1e;left:119.28px;font-family:'Liberation Mono', monospace;letter-spacing:-0.050px;-webkit-text-stroke:0.18px #c87c1e;">DateTimeToday</div>
<div class="t" style="font-size:14.95px;line-height:14.95px;top:107.43px;color:#3a3050;left:235.24px;font-family:'Liberation Mono', monospace;letter-spacing:-0.050px;-webkit-text-stroke:0.18px #3a3050;">()</div>
<div class="t" style="font-size:14.95px;line-height:14.95px;top:107.43px;color:#ff1cf0;left:253.08px;font-family:'Liberation Mono', monospace;letter-spacing:-0.050px;-webkit-text-stroke:0.18px #ff1cf0;">+</div>
<div class="t" style="font-size:14.95px;line-height:14.95px;top:107.43px;color:#3c9aa0;left:262.00px;font-family:'Liberation Mono', monospace;font-style:italic;letter-spacing:-0.050px;-webkit-text-stroke:0.18px #3c9aa0;">&#x27; - Validated&#x27;</div>
<div class="t" style="font-size:14.8px;line-height:14.8px;top:235.27px;color:#222;left:84.78px;transform:scaleX(1.0169);transform-origin:0 0;">Data type:</div>
<div class="t" style="font-size:14.8px;line-height:14.8px;top:234.07px;color:#555;left:171.20px;transform:scaleX(0.9686);transform-origin:0 0;">V_WString</div>
<div class="t" style="font-size:14.8px;line-height:14.8px;top:235.27px;color:#222;left:307.55px;transform:scaleX(0.9484);transform-origin:0 0;">Size:</div>
<div class="t" style="font-size:15px;line-height:15px;top:235.00px;color:#777;left:352.83px;transform:scaleX(0.9659);transform-origin:0 0;">1073741823</div>
<div class="t" style="font-size:15.2px;line-height:15.2px;top:16.03px;color:#222;left:780.74px;transform:scaleX(0.9630);transform-origin:0 0;">Start Here.yxmd</div>
<div class="t" style="font-size:15.2px;line-height:15.2px;top:16.03px;color:#111;left:934.45px;transform:scaleX(0.9510);transform-origin:0 0;">Render</div>
<div class="t" style="font-size:15.2px;line-height:15.2px;top:16.03px;color:#111;left:989.60px;transform:scaleX(1.0083);transform-origin:0 0;">to</div>
<div class="t" style="font-size:15.2px;line-height:15.2px;top:16.03px;color:#111;left:1008.13px;transform:scaleX(1.0667);transform-origin:0 0;">multiple</div>
<div class="t" style="font-size:15.2px;line-height:15.2px;top:16.03px;color:#111;left:1068.73px;transform:scaleX(0.9733);transform-origin:0 0;">named</div>
<div class="t" style="font-size:15.2px;line-height:15.2px;top:16.03px;color:#111;left:1121.00px;transform:scaleX(0.9000);transform-origin:0 0;">Excel</div>
<div class="t" style="font-size:15.2px;line-height:15.2px;top:16.03px;color:#111;left:1161.80px;transform:scaleX(0.9736);transform-origin:0 0;">sheets.yxmd*</div>
<div class="t" style="font-size:15.2px;line-height:15.2px;top:14.43px;color:#fff;left:1865.41px;transform:scaleX(0.9857);transform-origin:0 0;font-weight:700;">Run</div>
<div class="t" style="font-size:13.4px;line-height:13.4px;top:567.36px;color:#2b7bc9;left:781.86px;transform:scaleX(1.0437);transform-origin:0 0;">Results - Formula (11) - Output</div>
<div class="t" style="font-size:15.2px;line-height:15.2px;top:616.03px;color:#111;left:829.90px;transform:scaleX(0.9333);transform-origin:0 0;">22 of 22 Fields</div>
<div class="t" style="font-size:15.2px;line-height:15.2px;top:616.03px;color:#111;left:1006.80px;transform:scaleX(0.9351);transform-origin:0 0;">Cell Viewer</div>
<div class="t" style="font-size:15.2px;line-height:15.2px;top:616.03px;color:#111;left:1111.30px;transform:scaleX(0.9500);transform-origin:0 0;">300 records displayed</div>
<div class="t" style="font-size:16px;line-height:16px;top:614.86px;color:#a9a9a9;left:1365.52px;transform:scaleX(0.9837);transform-origin:0 0;">Search</div>
<div class="t" style="font-size:15.2px;line-height:15.2px;top:614.63px;color:#fff;left:1640.95px;transform:scaleX(0.9500);transform-origin:0 0;-webkit-text-stroke:0.55px #fff;">Data</div>
<div class="t" style="font-size:15.2px;line-height:15.2px;top:614.63px;color:#111;left:1685.92px;transform:scaleX(0.9762);transform-origin:0 0;-webkit-text-stroke:0.55px #111;">Metadata</div>
<div class="t" style="font-size:15.2px;line-height:15.2px;top:615.73px;color:#111;left:1785.30px;transform:scaleX(0.9900);transform-origin:0 0;">Actions</div>
<div class="t" style="font-size:11.6px;line-height:11.6px;top:618.28px;color:#111;left:1864.50px;transform:scaleX(0.9895);transform-origin:0 0;font-weight:700;">000</div>
<div class="t" style="font-size:13.4px;line-height:13.4px;top:656.16px;color:#222;left:818.44px;transform:scaleX(0.9644);transform-origin:0 0;font-weight:700;">Record</div>
<div class="t" style="font-size:13.4px;line-height:13.4px;top:656.16px;color:#222;left:901.00px;transform:scaleX(0.9976);transform-origin:0 0;font-weight:700;">tegory</div>
<div class="t" style="font-size:13.4px;line-height:13.4px;top:656.16px;color:#222;left:991.96px;transform:scaleX(1.0367);transform-origin:0 0;font-weight:700;">Product Name</div>
<div class="t" style="font-size:13.4px;line-height:13.4px;top:656.16px;color:#222;left:1320.00px;transform:scaleX(0.9286);transform-origin:0 0;font-weight:700;">Sales</div>
<div class="t" style="font-size:13.4px;line-height:13.4px;top:656.16px;color:#222;left:1416.30px;transform:scaleX(1.0370);transform-origin:0 0;font-weight:700;">Quantity</div>
<div class="t" style="font-size:13.4px;line-height:13.4px;top:656.16px;color:#222;left:1521.78px;transform:scaleX(1.0179);transform-origin:0 0;font-weight:700;">Discount</div>
<div class="t" style="font-size:13.4px;line-height:13.4px;top:656.16px;color:#222;left:1628.35px;transform:scaleX(1.0471);transform-origin:0 0;font-weight:700;">Profit</div>
<div class="t" style="font-size:13.4px;line-height:13.4px;top:656.16px;color:#222;left:1730.66px;transform:scaleX(1.0372);transform-origin:0 0;font-weight:700;">Date for FileName</div>
<div class="t" style="font-size:14.4px;line-height:14.4px;top:678.11px;color:#2a2a2a;right:1024.40px;transform:scaleX(0.94);transform-origin:100% 0;">1</div>
<div class="t" style="font-size:14.0px;line-height:14.0px;top:679.65px;color:#2a2a2a;left:901.00px;transform:scaleX(0.935);transform-origin:0 0;">ses</div>
<div class="t" style="font-size:14.0px;line-height:14.0px;top:679.65px;color:#2a2a2a;left:992.01px;transform:scaleX(0.9929);transform-origin:0 0;">Bush Somerset Collection Bookcase</div>
<div class="t" style="font-size:14.0px;line-height:14.0px;top:679.65px;color:#2a2a2a;left:1319.30px;transform:scaleX(0.935);transform-origin:0 0;">261.96</div>
<div class="t" style="font-size:14.0px;line-height:14.0px;top:679.65px;color:#2a2a2a;left:1415.90px;transform:scaleX(0.935);transform-origin:0 0;">2</div>
<div class="t" style="font-size:14.0px;line-height:14.0px;top:679.65px;color:#2a2a2a;left:1522.30px;transform:scaleX(0.935);transform-origin:0 0;">0</div>
<div class="t" style="font-size:14.0px;line-height:14.0px;top:679.65px;color:#2a2a2a;left:1628.50px;transform:scaleX(0.935);transform-origin:0 0;">41.9136</div>
<div class="t" style="font-size:14.0px;line-height:14.0px;top:679.65px;color:#2a2a2a;left:1735.20px;transform:scaleX(0.9803);transform-origin:0 0;">2022-09-30</div>
<div class="t" style="font-size:14.4px;line-height:14.4px;top:700.66px;color:#2a2a2a;right:1024.40px;transform:scaleX(0.94);transform-origin:100% 0;">2</div>
<div class="t" style="font-size:14.0px;line-height:14.0px;top:702.20px;color:#2a2a2a;left:992.00px;transform:scaleX(1.0036);transform-origin:0 0;">Easy-staple paper</div>
<div class="t" style="font-size:14.0px;line-height:14.0px;top:702.20px;color:#2a2a2a;left:1319.30px;transform:scaleX(0.935);transform-origin:0 0;">29.472</div>
<div class="t" style="font-size:14.0px;line-height:14.0px;top:702.20px;color:#2a2a2a;left:1415.90px;transform:scaleX(0.935);transform-origin:0 0;">3</div>
<div class="t" style="font-size:14.0px;line-height:14.0px;top:702.20px;color:#2a2a2a;left:1522.30px;transform:scaleX(0.935);transform-origin:0 0;">0.2</div>
<div class="t" style="font-size:14.0px;line-height:14.0px;top:702.20px;color:#2a2a2a;left:1628.50px;transform:scaleX(0.935);transform-origin:0 0;">9.9468</div>
<div class="t" style="font-size:14.0px;line-height:14.0px;top:702.20px;color:#2a2a2a;left:1735.20px;transform:scaleX(0.9803);transform-origin:0 0;">2022-09-30</div>
<div class="t" style="font-size:14.4px;line-height:14.4px;top:723.21px;color:#2a2a2a;right:1024.40px;transform:scaleX(0.94);transform-origin:100% 0;">3</div>
<div class="t" style="font-size:14.0px;line-height:14.0px;top:724.75px;color:#2a2a2a;left:993.00px;transform:scaleX(0.9972);transform-origin:0 0;">Global Value Mid-Back Manager&#x27;s Chair, Gray</div>
<div class="t" style="font-size:14.0px;line-height:14.0px;top:724.75px;color:#2a2a2a;left:1319.30px;transform:scaleX(0.935);transform-origin:0 0;">213.115</div>
<div class="t" style="font-size:14.0px;line-height:14.0px;top:724.75px;color:#2a2a2a;left:1415.90px;transform:scaleX(0.935);transform-origin:0 0;">5</div>
<div class="t" style="font-size:14.0px;line-height:14.0px;top:724.75px;color:#2a2a2a;left:1522.30px;transform:scaleX(0.935);transform-origin:0 0;">0.3</div>
<div class="t" style="font-size:14.0px;line-height:14.0px;top:724.75px;color:#2a2a2a;left:1628.50px;transform:scaleX(0.935);transform-origin:0 0;">-15.2225</div>
<div class="t" style="font-size:14.0px;line-height:14.0px;top:724.75px;color:#2a2a2a;left:1735.20px;transform:scaleX(0.9803);transform-origin:0 0;">2022-09-30</div>
<div class="t" style="font-size:14.4px;line-height:14.4px;top:745.76px;color:#2a2a2a;right:1024.40px;transform:scaleX(0.94);transform-origin:100% 0;">4</div>
<div class="t" style="font-size:14.0px;line-height:14.0px;top:747.30px;color:#2a2a2a;left:993.00px;transform:scaleX(0.9745);transform-origin:0 0;">Anker 36W 4-Port USB Wall Charger Travel Power...</div>
<div class="t" style="font-size:14.0px;line-height:14.0px;top:747.30px;color:#2a2a2a;left:1319.30px;transform:scaleX(0.935);transform-origin:0 0;">59.97</div>
<div class="t" style="font-size:14.0px;line-height:14.0px;top:747.30px;color:#2a2a2a;left:1415.90px;transform:scaleX(0.935);transform-origin:0 0;">5</div>
<div class="t" style="font-size:14.0px;line-height:14.0px;top:747.30px;color:#2a2a2a;left:1522.30px;transform:scaleX(0.935);transform-origin:0 0;">0.4</div>
<div class="t" style="font-size:14.0px;line-height:14.0px;top:747.30px;color:#2a2a2a;left:1628.50px;transform:scaleX(0.935);transform-origin:0 0;">-11.994</div>
<div class="t" style="font-size:14.0px;line-height:14.0px;top:747.30px;color:#2a2a2a;left:1735.20px;transform:scaleX(0.9803);transform-origin:0 0;">2022-09-30</div>
<div class="t" style="font-size:14.4px;line-height:14.4px;top:768.31px;color:#2a2a2a;right:1024.40px;transform:scaleX(0.94);transform-origin:100% 0;">5</div>
<div class="t" style="font-size:14.0px;line-height:14.0px;top:769.85px;color:#2a2a2a;left:901.00px;transform:scaleX(0.935);transform-origin:0 0;">rs</div>
<div class="t" style="font-size:14.0px;line-height:14.0px;top:769.85px;color:#2a2a2a;left:992.00px;transform:scaleX(0.9957);transform-origin:0 0;">Staples</div>
<div class="t" style="font-size:14.0px;line-height:14.0px;top:769.85px;color:#2a2a2a;left:1319.30px;transform:scaleX(0.935);transform-origin:0 0;">21.456</div>
<div class="t" style="font-size:14.0px;line-height:14.0px;top:769.85px;color:#2a2a2a;left:1415.90px;transform:scaleX(0.935);transform-origin:0 0;">9</div>
<div class="t" style="font-size:14.0px;line-height:14.0px;top:769.85px;color:#2a2a2a;left:1522.30px;transform:scaleX(0.935);transform-origin:0 0;">0.2</div>
<div class="t" style="font-size:14.0px;line-height:14.0px;top:769.85px;color:#2a2a2a;left:1628.50px;transform:scaleX(0.935);transform-origin:0 0;">6.9732</div>
<div class="t" style="font-size:14.0px;line-height:14.0px;top:769.85px;color:#2a2a2a;left:1735.20px;transform:scaleX(0.9803);transform-origin:0 0;">2022-09-30</div>
<div class="t" style="font-size:14.4px;line-height:14.4px;top:790.86px;color:#2a2a2a;right:1024.40px;transform:scaleX(0.94);transform-origin:100% 0;">6</div>
<div class="t" style="font-size:14.0px;line-height:14.0px;top:792.40px;color:#2a2a2a;left:992.00px;transform:scaleX(0.9952);transform-origin:0 0;">BIC Brite Liner Highlighters</div>
<div class="t" style="font-size:14.0px;line-height:14.0px;top:792.40px;color:#2a2a2a;left:1319.30px;transform:scaleX(0.935);transform-origin:0 0;">9.936</div>
<div class="t" style="font-size:14.0px;line-height:14.0px;top:792.40px;color:#2a2a2a;left:1415.90px;transform:scaleX(0.935);transform-origin:0 0;">3</div>
<div class="t" style="font-size:14.0px;line-height:14.0px;top:792.40px;color:#2a2a2a;left:1522.30px;transform:scaleX(0.935);transform-origin:0 0;">0.2</div>
<div class="t" style="font-size:14.0px;line-height:14.0px;top:792.40px;color:#2a2a2a;left:1628.50px;transform:scaleX(0.935);transform-origin:0 0;">2.7324</div>
<div class="t" style="font-size:14.0px;line-height:14.0px;top:792.40px;color:#2a2a2a;left:1735.20px;transform:scaleX(0.9803);transform-origin:0 0;">2022-09-30</div>
<div class="t" style="font-size:14.4px;line-height:14.4px;top:813.41px;color:#2a2a2a;right:1024.40px;height:9.39px;overflow:hidden;transform:scaleX(0.94);transform-origin:100% 0;">7</div>
<div class="t" style="font-size:14.0px;line-height:14.0px;top:814.95px;color:#2a2a2a;left:901.00px;height:7.85px;overflow:hidden;transform:scaleX(0.935);transform-origin:0 0;">rs</div>
<div class="t" style="font-size:14.0px;line-height:14.0px;top:814.95px;color:#2a2a2a;left:993.00px;transform:scaleX(0.9749);transform-origin:0 0;height:7.85px;overflow:hidden;">Advantus Push Pins, Aluminum Head</div>
<div class="t" style="font-size:14.0px;line-height:14.0px;top:814.95px;color:#2a2a2a;left:1319.30px;height:7.85px;overflow:hidden;transform:scaleX(0.935);transform-origin:0 0;">52.29</div>
<div class="t" style="font-size:14.0px;line-height:14.0px;top:814.95px;color:#2a2a2a;left:1415.90px;height:7.85px;overflow:hidden;transform:scaleX(0.935);transform-origin:0 0;">9</div>
<div class="t" style="font-size:14.0px;line-height:14.0px;top:814.95px;color:#2a2a2a;left:1522.30px;height:7.85px;overflow:hidden;transform:scaleX(0.935);transform-origin:0 0;">0</div>
<div class="t" style="font-size:14.0px;line-height:14.0px;top:814.95px;color:#2a2a2a;left:1628.50px;height:7.85px;overflow:hidden;transform:scaleX(0.935);transform-origin:0 0;">16.2099</div>
<div class="t" style="font-size:14.0px;line-height:14.0px;top:814.95px;color:#2a2a2a;left:1735.20px;transform:scaleX(0.9803);transform-origin:0 0;height:7.85px;overflow:hidden;">2022-09-30</div>
<div class="t" style="font-size:15.5px;line-height:15.5px;top:169.18px;color:#1a1a1a;left:870.00px;width:200px;text-align:center;transform:scaleX(0.85);transform-origin:50% 0;">300</div>
<div class="t" style="font-size:15.5px;line-height:15.5px;top:184.48px;color:#1a1a1a;left:870.50px;width:200px;text-align:center;transform:scaleX(0.85);transform-origin:50% 0;">102KB</div>
<div class="t" style="font-size:15.5px;line-height:15.5px;top:169.18px;color:#1a1a1a;left:1025.20px;width:200px;text-align:center;transform:scaleX(0.85);transform-origin:50% 0;">300</div>
<div class="t" style="font-size:15.5px;line-height:15.5px;top:184.48px;color:#1a1a1a;left:1025.40px;width:200px;text-align:center;transform:scaleX(0.85);transform-origin:50% 0;">110KB</div>
<div class="t" style="font-size:15.5px;line-height:15.5px;top:169.18px;color:#1a1a1a;left:1170.00px;width:200px;text-align:center;transform:scaleX(0.85);transform-origin:50% 0;">4</div>
<div class="t" style="font-size:15.5px;line-height:15.5px;top:184.48px;color:#1a1a1a;left:1170.20px;width:200px;text-align:center;transform:scaleX(0.85);transform-origin:50% 0;">383KB</div>
<div class="t" style="font-size:15.5px;line-height:15.5px;top:169.18px;color:#1a1a1a;left:1319.60px;width:200px;text-align:center;transform:scaleX(0.85);transform-origin:50% 0;">4</div>
<div class="t" style="font-size:15.5px;line-height:15.5px;top:184.48px;color:#1a1a1a;left:1319.80px;width:200px;text-align:center;transform:scaleX(0.85);transform-origin:50% 0;">383KB</div>
<div class="t" style="font-size:13.4px;line-height:13.4px;top:218.56px;color:#878787;left:872.30px;transform:scaleX(1.1000);transform-origin:0 0;-webkit-text-stroke:0.5px #878787;">Data for</div>
<div class="t" style="font-size:13.4px;line-height:13.4px;top:237.36px;color:#878787;left:872.31px;transform:scaleX(1.0908);transform-origin:0 0;-webkit-text-stroke:0.5px #878787;">Rendering to</div>
<div class="t" style="font-size:13.4px;line-height:13.4px;top:256.16px;color:#878787;left:872.30px;transform:scaleX(1.1012);transform-origin:0 0;-webkit-text-stroke:0.5px #878787;">multiple Excel</div>
<div class="t" style="font-size:13.4px;line-height:13.4px;top:274.96px;color:#878787;left:873.40px;transform:scaleX(1.0424);transform-origin:0 0;-webkit-text-stroke:0.5px #878787;">sheets.xlsx</div>
<div class="t" style="font-size:13.4px;line-height:13.4px;top:294.36px;color:#878787;left:873.40px;transform:scaleX(1.0635);transform-origin:0 0;-webkit-text-stroke:0.5px #878787;">Query=Orders</div>
<div class="t" style="font-size:13.4px;line-height:13.4px;top:218.66px;color:#878787;left:1022.21px;transform:scaleX(1.0869);transform-origin:0 0;-webkit-text-stroke:0.5px #878787;">Date for FileName</div>
<div class="t" style="font-size:13.4px;line-height:13.4px;top:237.46px;color:#878787;left:1023.30px;transform:scaleX(1.1929);transform-origin:0 0;-webkit-text-stroke:0.5px #878787;">= &#x27;</div>
<div class="t" style="font-size:13.4px;line-height:13.4px;top:256.26px;color:#878787;left:1023.30px;transform:scaleX(1.0817);transform-origin:0 0;-webkit-text-stroke:0.5px #878787;">&#x27;+DateTimeToday</div>
<div class="t" style="font-size:13.4px;line-height:13.4px;top:275.06px;color:#878787;left:1022.16px;transform:scaleX(1.1437);transform-origin:0 0;-webkit-text-stroke:0.5px #878787;">()+&#x27; - Validated&#x27;</div>
<div class="t" style="font-size:13.4px;line-height:13.4px;top:218.86px;color:#878787;left:1171.94px;transform:scaleX(1.0552);transform-origin:0 0;-webkit-text-stroke:0.5px #878787;">Basic Table</div>
<div class="t" style="font-size:13.4px;line-height:13.4px;top:218.86px;color:#878787;left:1322.50px;transform:scaleX(1.0830);transform-origin:0 0;-webkit-text-stroke:0.5px #878787;">Vertical Layout</div>
<div class="t" style="font-size:13.4px;line-height:13.4px;top:237.66px;color:#878787;left:1321.45px;transform:scaleX(1.0528);transform-origin:0 0;-webkit-text-stroke:0.5px #878787;">Section Breaks</div>
<div class="t" style="font-size:13.4px;line-height:13.4px;top:256.46px;color:#878787;left:1321.44px;transform:scaleX(1.0573);transform-origin:0 0;-webkit-text-stroke:0.5px #878787;">Each Group Of</div>
<div class="t" style="font-size:13.4px;line-height:13.4px;top:275.26px;color:#878787;left:1321.46px;transform:scaleX(1.0388);transform-origin:0 0;-webkit-text-stroke:0.5px #878787;">Records</div>
<div class="t" style="font-size:17.5px;line-height:17.5px;top:100.27px;color:#fff;left:60.60px;font-family:'Liberation Serif', serif;font-style:italic;">f</div>
<div class="t" style="font-size:15.5px;line-height:15.5px;top:101.94px;color:#fff;left:66.60px;font-family:'Liberation Serif', serif;font-style:italic;">x</div>
<div class="t" style="font-size:35px;line-height:35px;top:114.54px;color:#fff;left:58.55px;transform:scaleX(0.9529);transform-origin:0 0;font-family:'Liberation Serif', serif;font-style:italic;">x</div>
</div></body></html>
